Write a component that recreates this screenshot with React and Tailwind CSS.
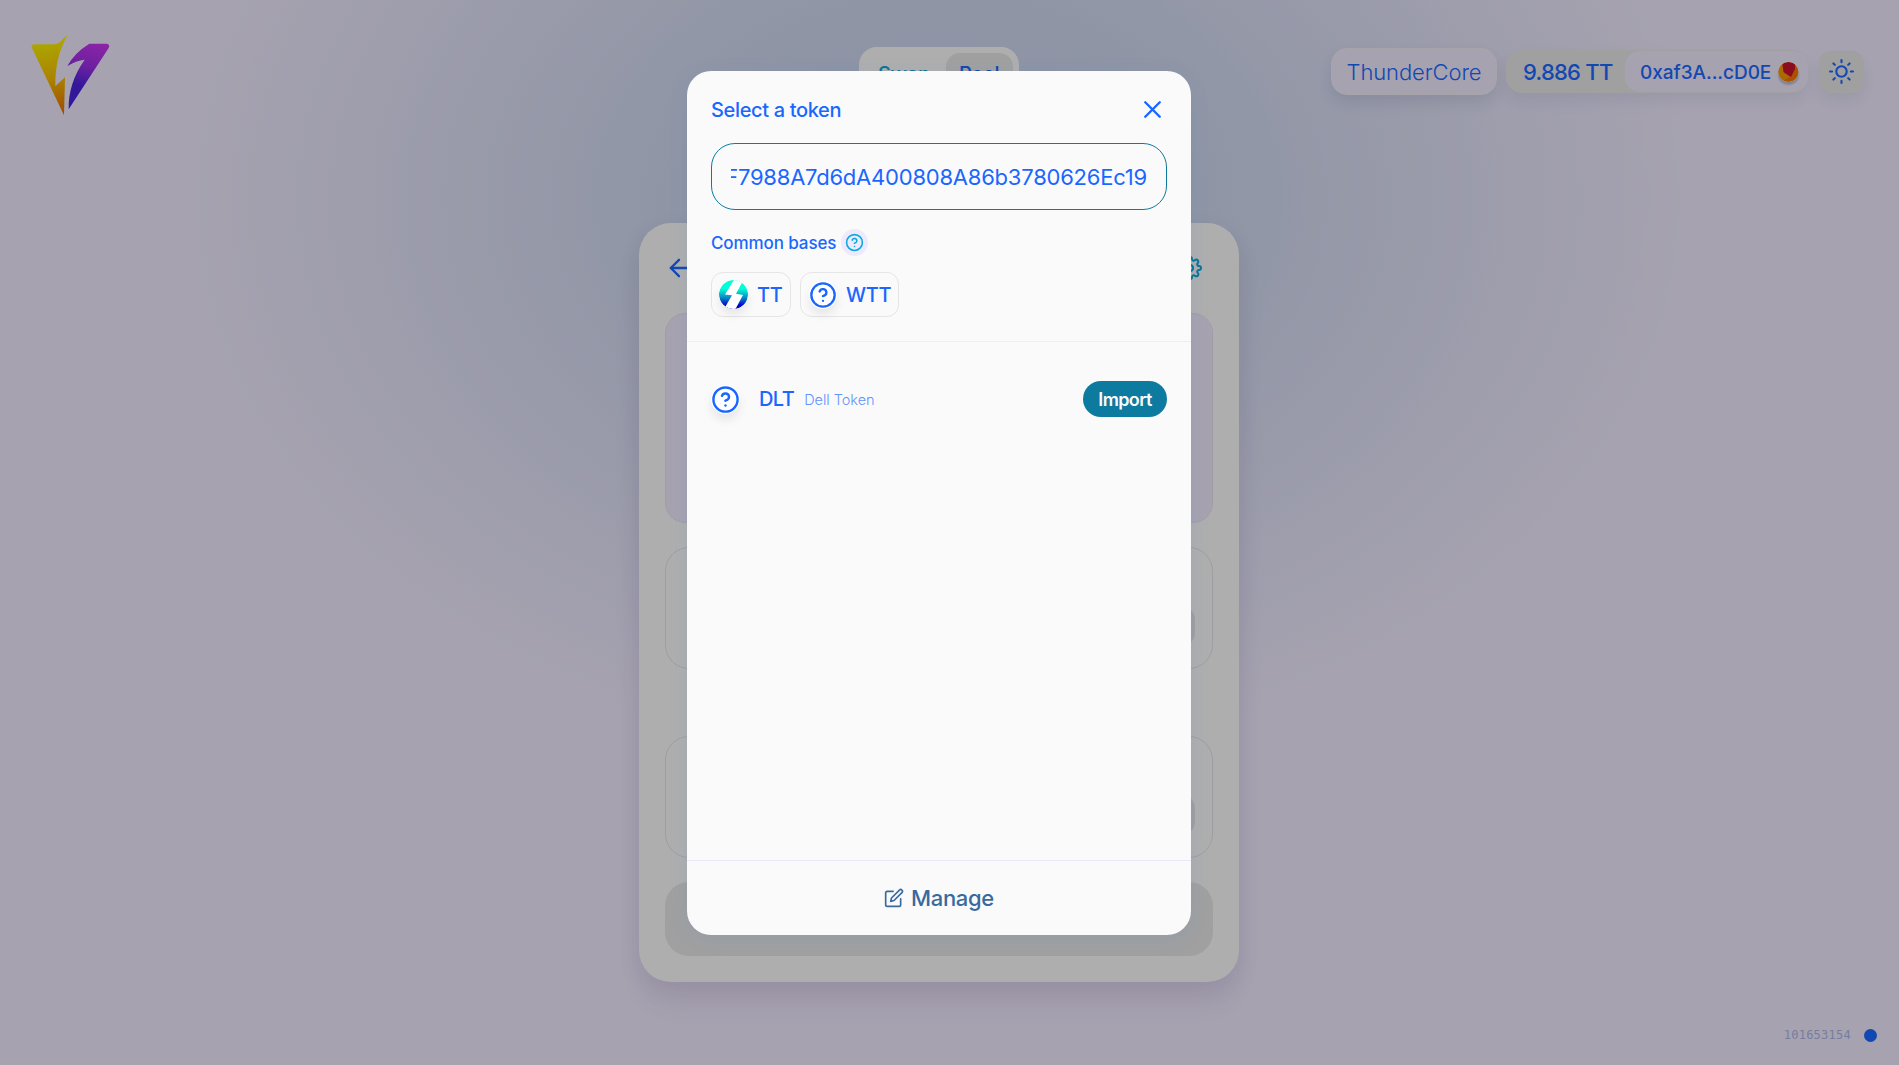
import React from "react";
import { FiArrowLeft, FiEdit, FiHelpCircle, FiSettings, FiSun, FiX } from "react-icons/fi";

function Logo() {
  return (
    <svg className="h-[110px] w-[140px]" viewBox="0 0 420 330" fill="none">
      <defs>
        <linearGradient id="logoGold" x1="150" y1="60" x2="190" y2="285" gradientUnits="userSpaceOnUse">
          <stop stopColor="#f6f000" />
          <stop offset="0.5" stopColor="#f5bd00" />
          <stop offset="1" stopColor="#e56a00" />
        </linearGradient>
        <linearGradient id="logoViolet" x1="280" y1="70" x2="220" y2="265" gradientUnits="userSpaceOnUse">
          <stop stopColor="#c434ee" />
          <stop offset="0.35" stopColor="#9c2fe6" />
          <stop offset="0.65" stopColor="#4b22de" />
          <stop offset="1" stopColor="#4a22e2" />
        </linearGradient>
      </defs>
      <path
        d="M102 73H158Q172 74 181 65Q192 53 203 45Q164 112 166 198L195 172L192 286L97 86Q91 75 102 73Z"
        fill="url(#logoGold)"
      />
      <path
        d="M268 71H321Q331 74 326 84L206 268Q204 190 254 119Q228 122 202 138Q224 98 268 71Z"
        fill="url(#logoViolet)"
      />
    </svg>
  );
}

function ThunderLogo() {
  return (
    <svg className="size-[29px] rounded-full shadow-[0_6px_10px_rgba(0,0,0,0.08)]" viewBox="0 0 29 29">
      <defs>
        <linearGradient id="thunder" x1="0" y1="0" x2="0" y2="1">
          <stop offset="0.3" stopColor="#00ffd8" />
          <stop offset="0.6" stopColor="#0a8cc4" />
          <stop offset="0.88" stopColor="#0000cc" />
        </linearGradient>
        <clipPath id="thunderClip">
          <circle cx="14.5" cy="14.5" r="14.5" />
        </clipPath>
      </defs>
      <g clipPath="url(#thunderClip)">
        <rect width="29" height="29" fill="url(#thunder)" />
        <path d="M15.5 -1H25L17 13.8L24 15L16 30H4.500L13 15.200L6 14.500Z" fill="#fff" />
      </g>
    </svg>
  );
}

function Jazzicon() {
  return (
    <svg className="h-5 w-[21px] shrink-0 rounded-full shadow-[0_3px_2px_rgba(0,0,0,0.2)]" viewBox="0 0 21 20">
      <defs>
        <clipPath id="jazz">
          <ellipse cx="10.500" cy="10" rx="10" ry="10" />
        </clipPath>
      </defs>
      <g clipPath="url(#jazz)">
        <rect width="21" height="20" fill="#f57600" />
        <path d="M0 0H8L6 11L12 15L2 20H0Z" fill="#f59a00" />
        <path d="M4 0H17L17 7L13 15L5.500 10Z" fill="#c8102e" />
      </g>
    </svg>
  );
}

function AmountField({ className }) {
  return (
    <div className={`flex h-[122px] items-center justify-end rounded-[24px] border border-[#e3e3e6] pr-[17px] ${className}`}>
      <div className="mt-[36px] h-11 w-[150px] rounded-2xl bg-[#e3e3e6]" />
    </div>
  );
}

function Header() {
  return (
    <header className="flex h-[130px] items-start justify-between">
      <div className="w-[618px] pt-5">
        <Logo />
      </div>
      <nav className="mt-[47px] flex h-[54px] w-40 rounded-[18px] bg-[#fafafa] p-1.5 text-[20px] font-[450]">
        <div className="flex w-[81px] items-center justify-center text-[#11a7d4]">
          <span className="mr-0.5 tracking-[-0.3px]">Swap</span>
        </div>
        <div className="flex w-[67px] items-center justify-center rounded-[14px] bg-[#e5e5e5] text-[#1a67ff]">
          <span className="tracking-[-0.5px]">Pool</span>
        </div>
      </nav>
      <div className="flex w-[640px] justify-end pr-[35px] pt-12 text-[#1a67ff]">
        <div className="mr-[9px] flex h-[47px] w-[166px] items-center justify-center rounded-2xl border border-[#f0edf3] bg-[#efe9fd] pt-px text-[22px] font-light tracking-[-0.1px] shadow-[0_8px_16px_rgba(20,50,100,0.11)]">
          ThunderCore
        </div>
        <div className="mr-[11px] mt-0.5 flex h-[43px] w-[302px] rounded-2xl bg-[#e5e5e5] shadow-[0_8px_16px_rgba(20,50,100,0.08)]">
          <div className="flex w-[119px] items-center whitespace-nowrap pl-[17px] pt-0.5 text-[22px] font-[450] tracking-[-0.75px]">
            9.886 TT
          </div>
          <div className="my-px flex w-[183px] items-center justify-between rounded-[15px] bg-[#efe9fd] pl-[15px] pr-[9px] text-[19px] font-[450]">
            <span className="pt-[3px] tracking-[-0.05px]">0xaf3A...cD0E</span>
            <Jazzicon />
          </div>
        </div>
        <div className="mt-[3px] flex h-[42px] w-[45px] items-center justify-center rounded-xl bg-[#e5e5e5] shadow-[0_8px_16px_rgba(20,50,100,0.08)]">
          <FiSun size={25} className="-mt-[2px]" />
        </div>
      </div>
    </header>
  );
}

function PoolCard() {
  return (
    <main className="ml-[639px] mt-[93px] h-[759px] w-[600px] rounded-[32px] bg-[#fafafa] px-[26px] shadow-[0_24px_32px_rgba(70,20,90,0.06),0_8px_24px_rgba(30,20,80,0.07)]">
      <div className="flex h-[90px] items-center justify-between pr-[11px]">
        <FiArrowLeft size={28} className="text-[#1a67ff]" />
        <FiSettings size={24} className="text-[#0fa6d6]" />
      </div>
      <div className="h-[210px] rounded-[20px] border border-[#e6e1f0] bg-[#efe9fd]" />
      <AmountField className="mt-6" />
      <AmountField className="mt-[67px]" />
      <div className="mt-6 h-[74px] rounded-[24px] bg-[#e5e5e5]" />
    </main>
  );
}

function TokenDialog() {
  return (
    <section className="flex h-[864px] w-[504px] flex-col overflow-hidden rounded-[24px] bg-[#fafafa] text-[#1a67ff] shadow-[0_4px_20px_rgba(47,128,237,0.09)]">
      <div className="h-[271px] border-b border-[#edebfc] px-6">
        <div className="flex h-[72px] items-center justify-between pr-0.5 pt-[6px]">
          <h1 className="text-[20px] font-[450] tracking-[-0.35px]">Select a token</h1>
          <FiX size={29} className="-mt-[2px] mr-[-2px]" />
        </div>
        <div className="flex h-[67px] items-center rounded-[24px] border border-[#0d7a9f] px-[19px]">
          <div className="flex flex-1 justify-end overflow-hidden whitespace-nowrap pt-0.5 text-[22px] tracking-[-0.22px]">
            F7988A7d6dA400808A86b3780626Ec19
          </div>
        </div>
        <div className="mt-[18px] flex h-7 items-center gap-1.5 text-[17px] font-[450]">
          <span className="w-[124px] whitespace-nowrap pt-[3px] tracking-[-0.1px]">Common bases</span>
          <span className="flex size-[27px] items-center justify-center rounded-full bg-[#efe9fd] text-[#0da9dd]">
            <FiHelpCircle size={19} />
          </span>
        </div>
        <div className="mt-4 flex gap-[9px] text-[20px] font-[450] tracking-[-0.3px]">
          <div className="flex h-[45px] w-20 items-center gap-[9px] rounded-xl border border-[#e5e5e5] pl-[7px]">
            <ThunderLogo />
            <span>TT</span>
          </div>
          <div className="flex h-[45px] w-[99px] items-center gap-[9px] rounded-xl border border-[#e5e5e5] pl-2">
            <FiHelpCircle size={28} className="rounded-full bg-white shadow-[0_6px_10px_rgba(0,0,0,0.08)]" />
            <span>WTT</span>
          </div>
        </div>
      </div>
      <div className="flex-1 px-6 pt-[39px]">
        <div className="flex h-9 items-center">
          <FiHelpCircle size={29} className="rounded-full bg-white shadow-[0_6px_10px_rgba(0,0,0,0.08)]" />
          <span className="ml-[19px] text-[20px] font-[450] tracking-[-0.6px]">DLT</span>
          <span className="ml-2.5 pt-0.5 text-[14.500px] font-light tracking-[-0.02px] text-[#5f94fb]">Dell Token</span>
          <button className="ml-auto h-9 w-[84px] rounded-full bg-[#0d7a9f] text-[18px] font-semibold tracking-[-0.65px] text-[#fafafa]">
            Import
          </button>
        </div>
      </div>
      <footer className="flex h-[75px] items-center justify-center gap-[7px] border-t border-[#ebe7fb] text-[22px] font-[450] text-[#386a9e]">
        <FiEdit size={20} />
        <span className="pt-px tracking-[-0.35px]">Manage</span>
      </footer>
    </section>
  );
}

export default function App() {
  return (
    <div className="relative h-[1065px] w-[1899px] overflow-hidden bg-[#efe9fd] bg-[radial-gradient(760px_560px_at_939px_200px,#c8d5ec_0%,#cdd6ed_35%,#efe9fd_100%)] font-['Inter',sans-serif]">
      <Header />
      <PoolCard />
      <div className="flex items-center justify-end gap-[13px] pr-[22px] pt-[43px] font-['DejaVu_Sans_Mono',monospace] text-[12px] leading-5 text-[#a9b4e6]">
        <span className="tracking-[0.25px]">101653154</span>
        <span className="size-[13px] rounded-full bg-[#1a67ff]" />
      </div>
      <div className="absolute inset-0 bg-black/30 pl-[687px] pt-[71px]">
        <TokenDialog />
      </div>
    </div>
  );
}
